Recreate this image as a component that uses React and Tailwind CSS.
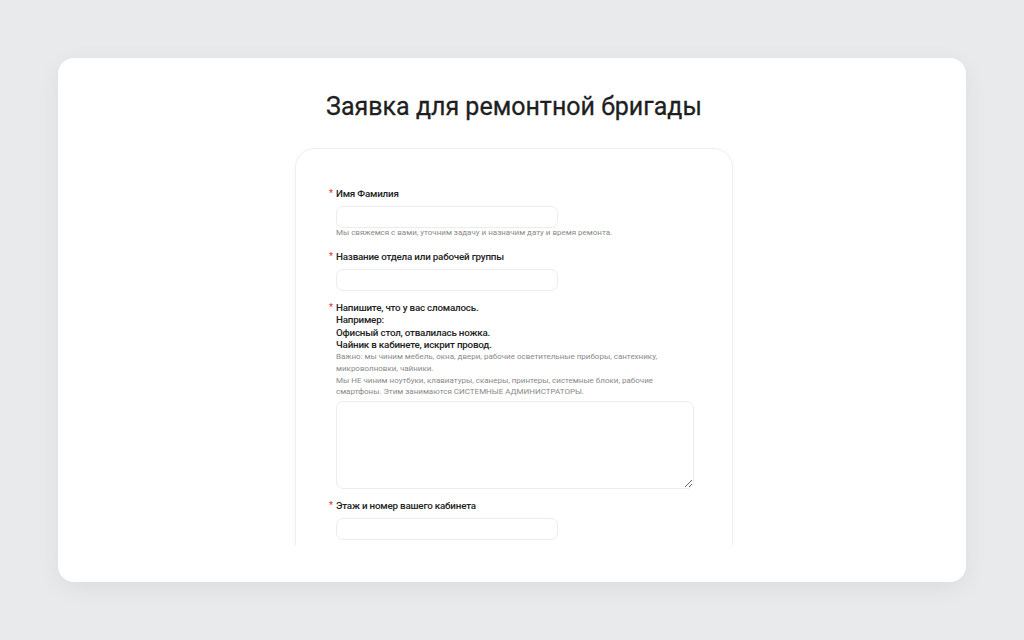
import React from 'react';

const font = { fontFamily: 'Roboto, "Noto Sans", "Liberation Sans", sans-serif' };

const Label = ({ children }) => (
  <div className="relative text-[9.8px] leading-[12.3px] font-medium tracking-[-0.2px] text-[#222]">
    <span className="absolute -left-[7px] top-[-1px] text-[9px] text-[#e5362b]">*</span>
    {children}
  </div>
);

const Input = () => (
  <input
    type="text"
    className="mt-[6px] block w-[222px] h-[22px] rounded-[7px] border border-[#ececec] bg-white outline-none"
  />
);

export default function App() {
  return (
    <div style={font} className="w-full h-[640px] bg-[#e9eaec] p-[58px]">
      <div className="h-full bg-white rounded-[16px] shadow-[0_6px_24px_rgba(0,0,0,0.06)] flex flex-col items-center pt-[33px] pb-[37px] overflow-hidden">
        <h1 className="text-[25px] leading-[32px] font-normal text-[#1f1f1f] ml-[4px] [-webkit-text-stroke:0.3px_#1f1f1f]">
          Заявка для ремонтной бригады
        </h1>
        <div className="flex-1 w-full overflow-hidden flex justify-center mt-[25px]">
          <div className="w-[438px] ml-[4px] border border-[#eeeeee] rounded-[20px] pt-[39px] pl-[40px] pr-[40px] pb-[40px] h-[600px] shadow-[0_0_6px_rgba(0,0,0,0.03)]">
            {/* Имя */}
            <Label>Имя Фамилия</Label>
            <Input />
            <p className="mt-[-1px] text-[8px] leading-[11.6px] text-[#8a8a8a]">
              Мы свяжемся с вами, уточним задачу и назначим дату и время ремонта.
            </p>

            {/* Отдел */}
            <div className="mt-[12px]">
              <Label>Название отдела или рабочей группы</Label>
              <Input />
            </div>

            {/* Что сломалось */}
            <div className="mt-[11px]">
              <Label>
                Напишите, что у вас сломалось.
                <br />
                Например:
                <br />
                Офисный стол, отвалилась ножка.
                <br />
                Чайник в кабинете, искрит провод.
              </Label>
              <p className="w-[358px] text-[8px] leading-[11.6px] text-[#8a8a8a]">
                Важно: мы чиним мебель, окна, двери, рабочие осветительные приборы, сантехнику, микроволновки, чайники.
                <br />
                Мы НЕ чиним ноутбуки, клавиатуры, сканеры, принтеры, системные блоки, рабочие смартфоны. Этим занимаются СИСТЕМНЫЕ АДМИНИСТРАТОРЫ.
              </p>
              <textarea className="mt-[3px] block w-[358px] h-[88px] rounded-[7px] border border-[#ececec] bg-white outline-none" />
            </div>

            {/* Кабинет */}
            <div className="mt-[11px]">
              <Label>Этаж и номер вашего кабинета</Label>
              <Input />
            </div>
          </div>
        </div>
      </div>
    </div>
  );
}
